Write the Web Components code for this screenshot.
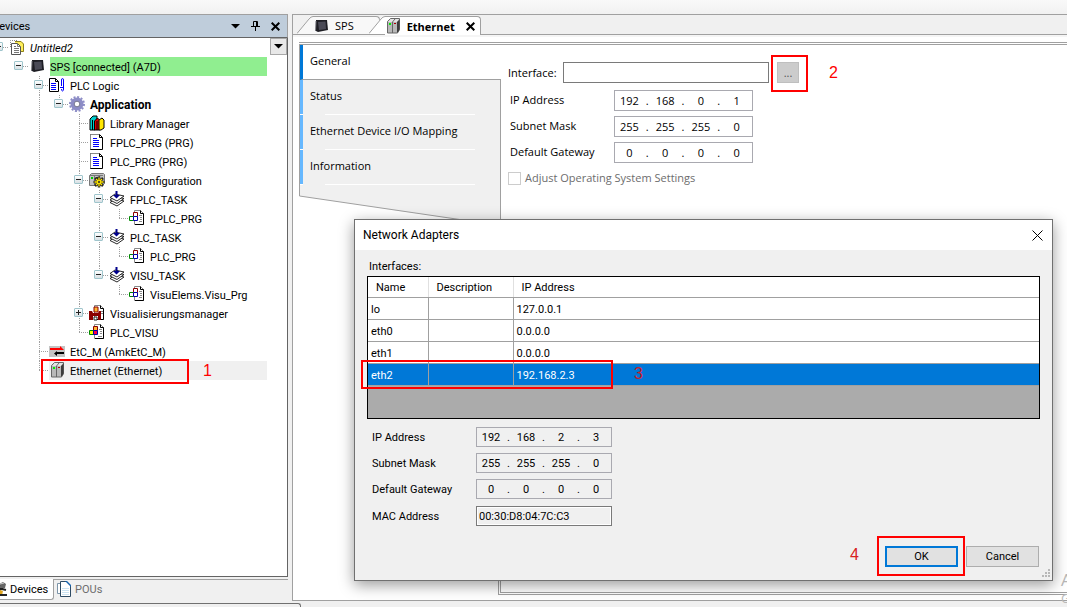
<!DOCTYPE html>
<html lang="en">
<head>
<meta charset="utf-8">
<title>Device configuration</title>
<style>
  html, body { margin: 0; height: 100%; }
  body {
    overflow: hidden; background: #f0f0f0; color: #000;
    --ui: Roboto, "Open Sans", sans-serif;
    font: 11px/19px var(--ui);
  }
</style>
</head>
<body>
<app-shell></app-shell>
<script>
const define = (name, html, setup) => {
  const tpl = document.createElement('template');
  tpl.innerHTML = '<style>*{box-sizing:border-box}[hidden]{display:none!important}</style>' + html;
  customElements.define(name, class extends HTMLElement {
    constructor() {
      super();
      this.attachShadow({ mode: 'open' }).append(tpl.content.cloneNode(true));
    }
    connectedCallback() { if (setup) setup(this, this.shadowRoot); }
  });
};

const ICONS = {
  project: `<path d="M1.500 8V1.500H9" fill="none" stroke="#888" stroke-dasharray="1 1"/><path d="M6 2h6l3 3v8H6z" fill="#ffef5a"/><path d="M6 2.500h6l2.500 2.500v7.500H12" fill="none" stroke="#8a7f20"/><path d="M2.500 4.500h6l3 3v8h-9z" fill="#fff" stroke="#555"/><path d="M8.500 4.500v3h3M5 7.500h2M5 9.500h5M5 11.500h5M5 13.500h5" fill="none" stroke="#777"/>`,
  chip: `<path d="M3 2l11 0 1 10-10 2-2-1z" fill="#1e1e24"/><path d="M5 4l7.500-.5.5 7.500-7 1z" fill="#4a4a56"/><path d="M3 3l-.5 10" stroke="#77777f"/>`,
  logic: `<path d="M.5 1.500h6l3 3v10h-9z" fill="#fff" stroke="#000"/><path d="M6.500 1.500v3h3" fill="none" stroke="#000"/><path d="M2 6.500h5M2 8.500h5M2 10.500h5M2 12.500h5" stroke="#00f"/><path d="M12.500 9V3q0-1.500 1-1.500t1 1.500v9q0 2-1 2t-1-2M11 10.500h4" fill="none" stroke="#00f"/>`,
  gear: `<circle cx="8" cy="8" r="4.500" fill="none" stroke="#8d8dc6" stroke-width="4"/><circle cx="8" cy="8" r="7" fill="none" stroke="#8d8dc6" stroke-width="2" stroke-dasharray="2 1.660"/><circle cx="8" cy="8" r="2.800" fill="#fff" stroke="#77778f"/>`,
  books: `<path d="M1 4l3-3h4v3l-2 2v9H1z" fill="#0cc" stroke="#000"/><path d="M5.500 6l3-3 2 2v10h-5z" fill="#e00000" stroke="#000"/><path d="M10 5l3-2 2 2v8l-3 2h-2z" fill="#ffe600" stroke="#000"/><path d="M3.500 5v10M8 6v9" stroke="#000"/>`,
  pou: `<path d="M1.500.5h9l3 3v12h-12z" fill="#fff" stroke="#000"/><path d="M1.500 15V.5h9" fill="none" stroke="#888"/><path d="M10.500.5v3h3" fill="none" stroke="#000"/><path d="M4 4.500h4M4 6.500h6M4 8.500h6M4 10.500h6M4 12.500h6" stroke="#00f"/>`,
  taskcfg: `<path d="M.5 3.500l2-2h12l1 1v9l-2 2H.5z" fill="#c4c4c4" stroke="#777"/><path d="M1 3.500h13M5.500 4v9M10.500 4v4" fill="none" stroke="#777"/><path d="M2 5h2v2H2z" fill="#0c0"/><path d="M7 5h2v2H7z" fill="#333"/><path d="M10 4.500v11M4.500 10h11M6 6l8 8M14 6l-8 8" stroke="#222" stroke-width="2.500"/><path d="M10 5.500v9M5.500 10h9M7 7l6 6M13 7l-6 6" stroke="#ffe600" stroke-width="1.300"/><circle cx="10" cy="10" r="1" fill="#222"/>`,
  task: `<g fill="#fff" stroke="#111" stroke-width=".9"><path d="M1 11.500l5-3.500 9 2-7 5z"/><path d="M1 9l5-3.500 9 2-7 5z"/><path d="M1 6.500l5-3.500 9 2-7 5z"/></g><path d="M6.500 0h2v4h2.500l-3.500 3.500L4 4h2.500z" fill="#00008b"/>`,
  call: `<path d="M5.500.5h6l3 3v11h-9z" fill="#fff" stroke="#888"/><path d="M11.500.5v3h3v11H6" fill="none" stroke="#000"/><path d="M10 5.500h3M11 7.500h2M11 9.500h2M10 11.500h3" stroke="#888"/><path d="M4.500 2.500h4v4h-4z" fill="#fff" stroke="#8b0000"/><path d="M.5 6.500h4v4h-4z" fill="#fff" stroke="#080"/><path d="M4.500 6.500h4v4h-4z" fill="#fff" stroke="#00a"/>`,
  visumgr: `<path d="M5.500.5h6l3 3v11h-9z" fill="#fff" stroke="#888"/><path d="M11.500.5v3h3v11H6" fill="none" stroke="#000"/><path d="M12 6.500h2M12 8.500h2" stroke="#888"/><path d="M5 2h4v5H5z" fill="#ffb732" stroke="#8b0000"/><path d="M0 6h3l1 2h5l1-2h2v9H9v-4H4v4H0z" fill="#8b0000"/><path d="M5 12h3v3H5z" fill="#fff" stroke="#222"/>`,
  visu: `<path d="M5.500.5h6l3 3v11h-9z" fill="#fff" stroke="#888"/><path d="M11.500.5v3h3v11H6" fill="none" stroke="#000"/><path d="M10 5.500h3M11 7.500h2M11 9.500h2M9 12.500h4" stroke="#888"/><path d="M4.500 2.500h4v4h-4z" fill="#ffb732" stroke="#8b0000"/><path d="M.5 6.500h4v4h-4z" fill="#ff0" stroke="#080"/><path d="M4.500 6.500h4v4h-4z" fill="#f04" stroke="#00a"/>`,
  bus: `<path d="M0 3h16v11H0z" fill="#c4c4c4"/><path d="M1 5h10V3l4 4H1z" fill="#f00"/><path d="M15 9H8V8l-3 2.500L8 13v-2h7z" fill="#000"/>`,
  server: `<path d="M2.500 3.500l3-3h9v11l-2 3.500h-10z" fill="#b8b8b8" stroke="#666"/><path d="M3 4l2.500-3H14l-2 3z" fill="#e4e4e4"/><path d="M7.500 15V4l2.500-3" fill="none" stroke="#666"/><path d="M12 4l2.500-2.500V12l-2.500 3z" fill="#3c3c3c"/><path d="M4 5h2v2H4z" fill="#0e0"/><path d="M9 5h2v1H9z" fill="#a00"/>`,
  pous: `<path d="M1.500 2.500h8v10h-8z" fill="#fff" stroke="#7c94a8"/><path d="M4.500.5h6l4 4v11h-10z" fill="#fff" stroke="#2d4a63"/><path d="M9 0h2l4 4v2z" fill="#1764b0"/><path d="M6 7.500h7M6 9.500h7M6 11.500h7M6 13.500h7" stroke="#cbe3f2"/>`,
  device: `<path d="M8 3l4-2 3 2-1 4-5 1z" fill="#666"/><path d="M9 3l4-1" stroke="#ccc"/><path d="M1 2l8 3M3 8h9" stroke="#222" stroke-width="2"/><path d="M4 9h6l2 6H3z" fill="#888"/><path d="M9 9l3 1-1 4H8z" fill="#e0a51c"/><path d="M9 14h7M11 8l4 1" stroke="#222" stroke-width="2"/>`
};

define('ui-icon', `<style>:host{display:block;flex:none;width:16px;height:16px}svg{display:block;width:100%;height:100%}</style>
<svg viewBox="0 0 16 16" aria-hidden="true"></svg>`,
  (host, root) => { root.querySelector('svg').innerHTML = ICONS[host.getAttribute('name')] || ''; });

/* A numbered red frame drawn over a part of the page. */
define('call-out', `<style>
  :host{display:block;position:absolute;z-index:5;border:2px solid #f00;pointer-events:none;box-sizing:border-box}
  span{position:absolute;top:0;bottom:0;left:calc(100% + var(--gap,23px));display:flex;align-items:center;padding-bottom:2px;color:var(--ink,#f00);font:16px/18px "Liberation Sans",Arial,sans-serif}
  :host([side=left]) span{left:auto;right:calc(100% + 20px)}
</style><span><slot></slot></span>`);

/* One tree line. guides: one letter per indent column
   (" " empty, "|" pass through, "+" branch, "L" last branch, "." joint with no line above). */
define('tree-row', `<style>
  :host{display:flex;height:19px;margin-left:-11px;white-space:nowrap}
  i{flex:none;width:20px;position:relative;
    --v:repeating-linear-gradient(180deg,#a0a0a0 0 1px,transparent 1px 2px);
    --h:repeating-linear-gradient(90deg,#a0a0a0 0 1px,transparent 1px 2px)}
  i.pass{background:var(--v) 10px 0/1px 100% no-repeat}
  i.branch{background:var(--v) 10px 0/1px 100% no-repeat,var(--h) 10px 9px/10px 1px no-repeat}
  i.last{background:var(--v) 10px 0/1px 9px no-repeat,var(--h) 10px 9px/10px 1px no-repeat}
  i.joint{background:var(--h) 10px 9px/10px 1px no-repeat}
  button{position:absolute;left:5px;top:4px;width:9px;height:9px;padding:0;border:1px solid #9fc5cc;border-radius:1px;
    background:linear-gradient(#222,#222) center/5px 1px no-repeat,linear-gradient(#fff,#d8e0e4)}
  button.plus{background:linear-gradient(#222,#222) center/5px 1px no-repeat,linear-gradient(#222,#222) center/1px 5px no-repeat,linear-gradient(#fff,#d8e0e4)}
  ui-icon{margin-top:1px}
  span{flex:1;margin:0 20px 0 5px;padding-top:2px;line-height:17px;background:var(--row,none)}
  :host([look=root]) span{font-style:italic}
  :host([look=bold]) span{font-weight:700;font-size:12px}
  :host([look=online]) span{--row:#90ee90}
  :host([look=picked]){background:linear-gradient(#f0f0f0,#f0f0f0) 60px 0/calc(100% - 80px) 100% no-repeat}
</style><ui-icon></ui-icon><span><slot></slot></span>`,
  (host, root) => {
    const icon = root.querySelector('ui-icon');
    icon.setAttribute('name', host.getAttribute('icon'));
    icon.shadowRoot.querySelector('svg').innerHTML = ICONS[host.getAttribute('icon')];
    const kinds = { ' ': '', '|': 'pass', '+': 'branch', 'L': 'last', '.': 'joint' };
    const cells = [...host.getAttribute('guides')].map(c => {
      const cell = document.createElement('i'); cell.className = kinds[c]; return cell;
    });
    const toggle = host.getAttribute('toggle');
    if (toggle) {
      const b = document.createElement('button');
      b.className = toggle; b.setAttribute('aria-label', toggle === 'plus' ? 'Expand' : 'Collapse');
      cells[cells.length - 1].append(b);
    }
    icon.before(...cells);
  });

define('device-panel', `<style>
  :host{display:grid;grid-template-rows:24px 1fr 24px;position:relative;min-height:0;overflow:hidden}
  header{display:flex;align-items:center;border:1px solid #a0a0a0;border-left:0;border-bottom-color:#646464;background:#bfcddb;padding-right:2px}
  h2{flex:1;margin:0 0 0 -8px;font:inherit}
  header button{border:0;background:none;padding:0;width:20px;height:16px;display:grid;place-items:center}
  .tree{position:relative;background:#fff;border:solid #646464;border-width:0 1px 1px 0;overflow:hidden}
  .drop{position:absolute;right:0;top:0;width:17px;height:17px;padding:0;border:1px solid #a8a8a8;background:#e8e8e8;display:grid;place-items:center}
  nav{display:flex;padding-top:2px}
  nav a{display:flex;align-items:center;text-decoration:none;color:#6d6d6d;height:18px}
  nav a ui-icon{margin-right:3px}
  nav .on{color:#000;background:#fff;width:54px;height:21px;border:solid #a0a0a0;border-width:0 1px 1px 0;border-bottom-right-radius:3px}
  .on ui-icon{margin-left:-9px}
  .rest{flex:1;border-top:1px solid #a0a0a0;padding-left:2px}
  call-out{left:41px;top:345px;width:148px;height:25px;--gap:16px}
</style>
<header><h2>Devices</h2>
  <button aria-label="Window position"><svg width="9" height="5"><path d="M0 0h9L4.500 4.500z"/></svg></button>
  <button aria-label="Auto hide"><svg width="9" height="10" fill="none" stroke="#000"><path d="M2.500 5V.5h4V5M5.500 0v5M0 5.500h9M4.500 6v4"/></svg></button>
  <button aria-label="Close"><svg width="9" height="9" stroke="#000" stroke-width="2"><path d="M.7.7l7.600 7.600M8.300.7L.7 8.300"/></svg></button>
</header>
<div class="tree">
  <tree-row guides="." toggle="minus" icon="project" look="root">Untitled2</tree-row>
  <tree-row guides=" ." toggle="minus" icon="chip" look="online">SPS [connected] (A7D)</tree-row>
  <tree-row guides="  +" toggle="minus" icon="logic">PLC Logic</tree-row>
  <tree-row guides="  |L" toggle="minus" icon="gear" look="bold">Application</tree-row>
  <tree-row guides="  | +" icon="books">Library Manager</tree-row>
  <tree-row guides="  | +" icon="pou">FPLC_PRG (PRG)</tree-row>
  <tree-row guides="  | +" icon="pou">PLC_PRG (PRG)</tree-row>
  <tree-row guides="  | +" toggle="minus" icon="taskcfg">Task Configuration</tree-row>
  <tree-row guides="  | |+" toggle="minus" icon="task">FPLC_TASK</tree-row>
  <tree-row guides="  | ||L" icon="call">FPLC_PRG</tree-row>
  <tree-row guides="  | |+" toggle="minus" icon="task">PLC_TASK</tree-row>
  <tree-row guides="  | ||L" icon="call">PLC_PRG</tree-row>
  <tree-row guides="  | |L" toggle="minus" icon="task">VISU_TASK</tree-row>
  <tree-row guides="  | | L" icon="call">VisuElems.Visu_Prg</tree-row>
  <tree-row guides="  | +" toggle="plus" icon="visumgr">Visualisierungsmanager</tree-row>
  <tree-row guides="  | L" icon="visu">PLC_VISU</tree-row>
  <tree-row guides="  +" icon="bus">EtC_M (AmkEtC_M)</tree-row>
  <tree-row guides="  L" icon="server" look="picked">Ethernet (Ethernet)</tree-row>
  <button class="drop" aria-label="Tree options"><svg width="9" height="5"><path d="M0 0h9L4.500 4.500z"/></svg></button>
</div>
<nav><a class="on" href="#devices"><ui-icon name="device"></ui-icon>Devices</a><div class="rest"><a href="#pous"><ui-icon name="pous"></ui-icon>POUs</a></div></nav>
<call-out>1</call-out>`);

define('editor-tab', `<style>
  :host{display:flex;height:18px;align-items:stretch;position:relative}
  .edge{flex:none;display:block}
  .body{display:flex;align-items:center;padding-right:var(--end,25px);border:solid #a0a0a0;border-width:1px 1px 0 0;border-top-right-radius:4px;background:var(--fill,#f8f8f8)}
  a{color:inherit;text-decoration:none;margin-left:6px;line-height:17px}
  button{border:0;background:none;padding:0;margin-left:11px;height:9px;display:grid;line-height:9px}
  button svg{display:block}
  :host([active]){font-weight:700;--fill:#fff;--end:5px;margin-left:-11px;margin-bottom:-1px;height:19px;z-index:1}
</style><svg class="edge" width="16" height="18"><path d="M0 18L12 2q1-1.500 4-1.500V19" fill="var(--fill,#f8f8f8)" stroke="none"/><path d="M0 17.500L12 3q2-2.500 4-2.500" fill="none" stroke="#a0a0a0"/></svg>
<div class="body"><ui-icon></ui-icon><a href="#"><slot></slot></a><button hidden aria-label="Close tab"><svg width="9" height="9" stroke="#000" stroke-width="2"><path d="M.7.7l7.600 7.600M8.300.7L.7 8.300"/></svg></button></div>`,
  (host, root) => {
    root.querySelector('ui-icon').shadowRoot.querySelector('svg').innerHTML = ICONS[host.getAttribute('icon')];
    root.querySelector('button').hidden = !host.hasAttribute('active');
  });

/* Label plus four numeric segments divided by dots. */
define('ip-field', `<style>
  :host{display:flex;align-items:center}
  label{flex:none;width:var(--label,104px);padding-bottom:var(--lift,0)}
  .box{display:flex;align-items:center;width:var(--box,139px);height:var(--tall,21px);border:1px solid #a9a9b0;background:var(--paper,#fff);padding:0 2px 0 1px}
  input{flex:1;min-width:0;width:0;border:0;padding:0;background:none;font:inherit;text-align:center;color:inherit;height:17px}
  b{font-weight:400;width:9px;text-align:center}
</style><label for="s0"></label><div class="box" role="group"></div>`,
  (host, root) => {
    const text = host.getAttribute('label');
    root.querySelector('label').textContent = text;
    root.querySelector('.box').innerHTML = host.getAttribute('value').split('.')
      .map((v, i) => `<input id="s${i}" value="${v}" aria-label="${text} part ${i + 1}">`).join('<b>.</b>');
  });

define('editor-nav', `<style>
  :host{display:block;align-self:start;position:relative;z-index:1;margin-right:-3px;padding-left:1px;border-top:3px double #a0a0a0;
    background:linear-gradient(#a0a0a0,#a0a0a0) 0 0/1px calc(100% - 30px) no-repeat,#fff}
  a{display:block;position:relative;height:35px;padding:0 0 0 7px;line-height:31px;border-left:3px solid #66b8ff;border-right:1px solid #a0a0a0;background:#f0f0f0;color:inherit;text-decoration:none}
  a::after{content:"";position:absolute;left:22px;right:25px;bottom:0;height:1px;background:#fff}
  a::before{content:"";position:absolute;left:-3px;width:3px;bottom:0;height:1px;background:#fff}
  a.on{background:#fff;border-left-color:#0078d7;border-right:0;border-bottom:1px solid #a0a0a0}
  a.on::after,a.on::before{display:none}
  svg{display:block;height:41px;margin-left:-1px;width:calc(100% + 1px)}
</style>
<a class="on" href="#general">General</a><a href="#status">Status</a><a href="#mapping">Ethernet Device I/O Mapping</a><a href="#information">Information</a>
<svg viewBox="0 0 202 41" preserveAspectRatio="none"><path d="M0 0h202v41L0 11z" fill="#f0f0f0"/><path d="M.5 0v11L201.500 40.500V0" fill="none" stroke="#a0a0a0"/></svg>`);

define('editor-pane', `<style>
  :host{display:grid;grid-template-rows:20px 1fr;border:solid #a0a0a0;border-width:1px 0 1px 1px;position:relative;min-width:0;min-height:0;font-family:"Open Sans","Noto Sans",sans-serif}
  .tabs{display:flex;align-items:flex-end;padding-left:4px;border-bottom:1px solid #a0a0a0;position:relative}
  .area{display:grid;grid-template-columns:199px 1fr;padding:7px 0 5px 6px;background:linear-gradient(#f5f5f5,#f5f5f5) 0 0/100% 2px no-repeat,#fff;min-height:0}
  .form{border:3px double #a0a0a0;border-right:0;padding:17px 0 0 7px;display:flex;flex-direction:column;gap:5px;line-height:17px}
  .row{display:flex;align-items:center;height:21px}
  .first{margin-bottom:2px}
  .first label{width:55px}
  .first input{width:206px;height:21px;border:1px solid #7a7a7a;padding:0 3px;font:inherit}
  .first button{width:22px;height:21px;margin-left:8px;padding:0;border:1px solid #bfbfbf;background:#ccc;color:#555;font:inherit;line-height:17px}
  ip-field{margin-left:2px;--lift:2px}
  .check{color:#6d6d6d}
  .check label{padding-bottom:2px}
  .check input{appearance:none;width:13px;height:13px;margin:0 4px 0 0;border:1px solid #ccc;background:#fff}
  call-out{left:478px;top:40px;width:37px;height:37px}
</style>
<div class="tabs"><editor-tab icon="chip">SPS</editor-tab><editor-tab icon="server" active>Ethernet</editor-tab></div>
<div class="area">
  <editor-nav></editor-nav>
  <div class="form">
    <div class="row first"><label for="if">Interface:</label><input id="if"><button>...</button></div>
    <ip-field label="IP Address" value="192.168.0.1"></ip-field>
    <ip-field label="Subnet Mask" value="255.255.255.0"></ip-field>
    <ip-field label="Default Gateway" value="0.0.0.0"></ip-field>
    <div class="row check"><input id="os" type="checkbox" disabled><label for="os">Adjust Operating System Settings</label></div>
  </div>
</div>
<call-out>2</call-out>`);

define('adapter-dialog', `<style>
  :host{display:block;position:absolute;z-index:4;left:354px;right:14px;top:219px;border:1px solid #707070;background:#f0f0f0;box-shadow:0 4px 14px rgba(0,0,0,.4)}
  header{display:flex;align-items:center;height:30px;background:#fff;padding:0 9px 0 8px}
  h1{flex:1;margin:0;font:12px/18px var(--ui)}
  header button{border:0;background:none;padding:0;height:11px}
  svg{display:block}
  .body{padding:7px 12px 13px}
  .cap{margin:0 0 0 2px;height:19px}
  .grid{border:1px solid #000;height:143px;background:#ababab}
  table{width:100%;border-collapse:collapse;table-layout:fixed;background:#fff;line-height:18px}
  th,td{padding:2px 0 0 3px;text-align:left;font-weight:400;height:22px;border:1px solid #a0a0a0;border-top:0}
  th{padding-left:8px;height:20px;border-color:#e0e0e0;border-bottom-color:#a0a0a0}
  tr>:first-child{border-left:0}tr>:last-child{border-right:0}
  .sel td{background:#0078d7;color:#fff}
  .info{display:flex;flex-direction:column;gap:6px;padding:8px 0 0 5px}
  ip-field{--label:104px;--box:136px;--tall:20px;--paper:#f0f0f0}
  .mac{display:flex;align-items:center;margin-top:1px}
  .mac label{width:104px}
  .mac input{width:136px;height:20px;border:1px solid #7a7a7a;outline:1px solid #fff;outline-offset:-2px;background:#f0f0f0;padding:0 2px;font:inherit}
  footer{display:flex;justify-content:flex-end;gap:8px;margin:20px 1px 0 0}
  footer button{width:73px;height:21px;padding:0;border:1px solid #adadad;background:#e1e1e1;font:inherit;line-height:17px}
  footer .ok{border:2px solid #0078d7}
  .grip{position:absolute;right:1px;bottom:2px}
  .c3{left:6px;top:140px;width:252px;height:29px;--ink:#c8202c}
  .c4{right:87px;bottom:4px;width:88px;height:40px;--ink:#d82020}
</style>
<header><h1>Network Adapters</h1><button aria-label="Close"><svg width="11" height="11" stroke="#000"><path d="M.5.5l10 10M10.500.5l-10 10"/></svg></button></header>
<div class="body">
  <p class="cap" id="cap">Interfaces:</p>
  <div class="grid"><table aria-labelledby="cap">
    <colgroup><col style="width:60px"><col style="width:85px"><col></colgroup>
    <tr><th>Name</th><th>Description</th><th>IP Address</th></tr>
    <tr><td>lo</td><td></td><td>127.0.0.1</td></tr>
    <tr><td>eth0</td><td></td><td>0.0.0.0</td></tr>
    <tr><td>eth1</td><td></td><td>0.0.0.0</td></tr>
    <tr class="sel"><td>eth2</td><td></td><td>192.168.2.3</td></tr>
  </table></div>
  <div class="info">
    <ip-field label="IP Address" value="192.168.2.3"></ip-field>
    <ip-field label="Subnet Mask" value="255.255.255.0"></ip-field>
    <ip-field label="Default Gateway" value="0.0.0.0"></ip-field>
    <div class="mac"><label for="mac">MAC Address</label><input id="mac" readonly value="00:30:D8:04:7C:C3"></div>
  </div>
  <footer><button class="ok">OK</button><button>Cancel</button></footer>
</div>
<svg class="grip" width="9" height="9" fill="#b8b8b8"><path d="M6 0h2v2H6zM3 3h2v2H3zM6 3h2v2H6zM0 6h2v2H0zM3 6h2v2H3zM6 6h2v2H6z"/></svg>
<call-out class="c3">3</call-out>
<call-out class="c4" side="left">4</call-out>`);

define('app-shell', `<style>
  :host{display:grid;grid-template:14px minmax(0,1fr) 6px/288px minmax(0,1fr);column-gap:4px;height:100vh;position:relative;overflow:hidden}
  .bar{grid-column:1/-1;background:linear-gradient(#f9f9f9,#f1f1f1)}
  .status{width:301px;height:4px;margin-top:2px;border:solid #707070;border-width:1px 1px 0 0;border-top-right-radius:3px;grid-column:1/-1}
  .mark{position:absolute;z-index:3;left:calc(100% - 6px);top:570px;color:#b8b8b8;font:17px/20px "Open Sans","Noto Sans",sans-serif;white-space:nowrap}
  .mark small{display:block;font-size:13px;line-height:16px}
</style>
<div class="bar"></div>
<device-panel></device-panel>
<editor-pane></editor-pane>
<div class="status"></div>
<div class="mark">A<small>G</small></div>
<adapter-dialog></adapter-dialog>`);
</script>
</body>
</html>
